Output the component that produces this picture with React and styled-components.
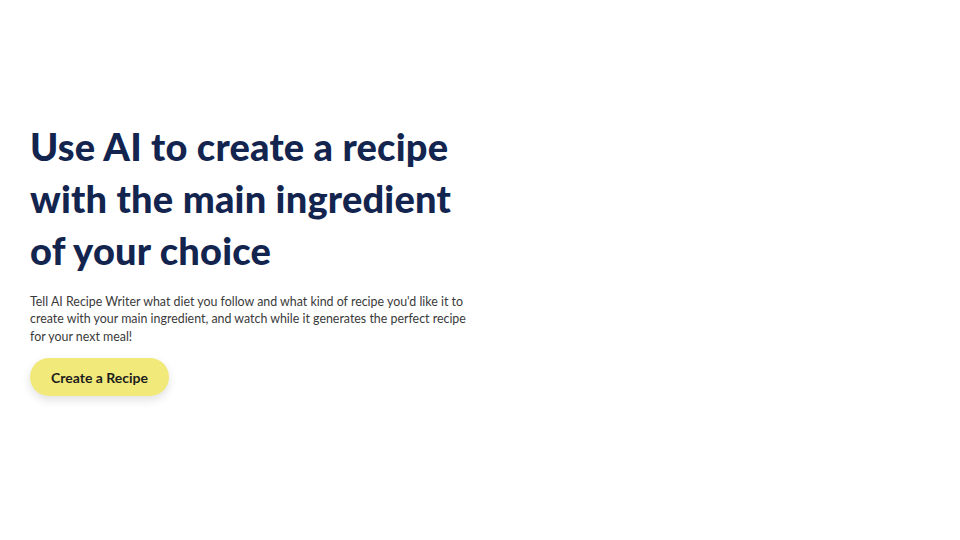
import React from "react";
import styled, { createGlobalStyle } from "styled-components";

const GlobalStyle = createGlobalStyle`
  html, body {
    margin: 0;
    padding: 0;
    background: #ffffff;
  }
  * {
    box-sizing: border-box;
  }
`;

const Hero = styled.section`
  min-height: 540px;
  display: flex;
  flex-direction: column;
  justify-content: center;
  padding: 0 30px 24px;
  font-family: "Lato", "Noto Sans", sans-serif;
`;

const Title = styled.h1`
  margin: 0;
  max-width: 470px;
  color: #13254f;
  font-size: 38px;
  font-weight: 900;
  line-height: 52px;
  letter-spacing: 0.2px;
`;

const Lead = styled.p`
  margin: 17px 0 0;
  max-width: 480px;
  color: #3a3a3a;
  font-size: 12.4px;
  line-height: 17.5px;
`;

const Button = styled.button`
  margin-top: 13px;
  align-self: flex-start;
  height: 38px;
  padding: 0 21px;
  border: none;
  border-radius: 19px;
  background: #f1e97a;
  color: #1d1d1d;
  font-family: "Lato", "Noto Sans", sans-serif;
  font-size: 14px;
  font-weight: 700;
  box-shadow: 0 4px 10px rgba(0, 0, 0, 0.12);
  cursor: pointer;
`;

export default function App() {
  return (
    <>
      <GlobalStyle />
      <Hero>
        <Title>
          Use AI to create a recipe
          <br />
          with the main ingredient
          <br />
          of your choice
        </Title>
        <Lead>
          Tell AI Recipe Writer what diet you follow and what kind of recipe
          you'd like it to
          <br />
          create with your main ingredient, and watch while it generates the
          perfect recipe
          <br />
          for your next meal!
        </Lead>
        <Button>Create a Recipe</Button>
      </Hero>
    </>
  );
}
